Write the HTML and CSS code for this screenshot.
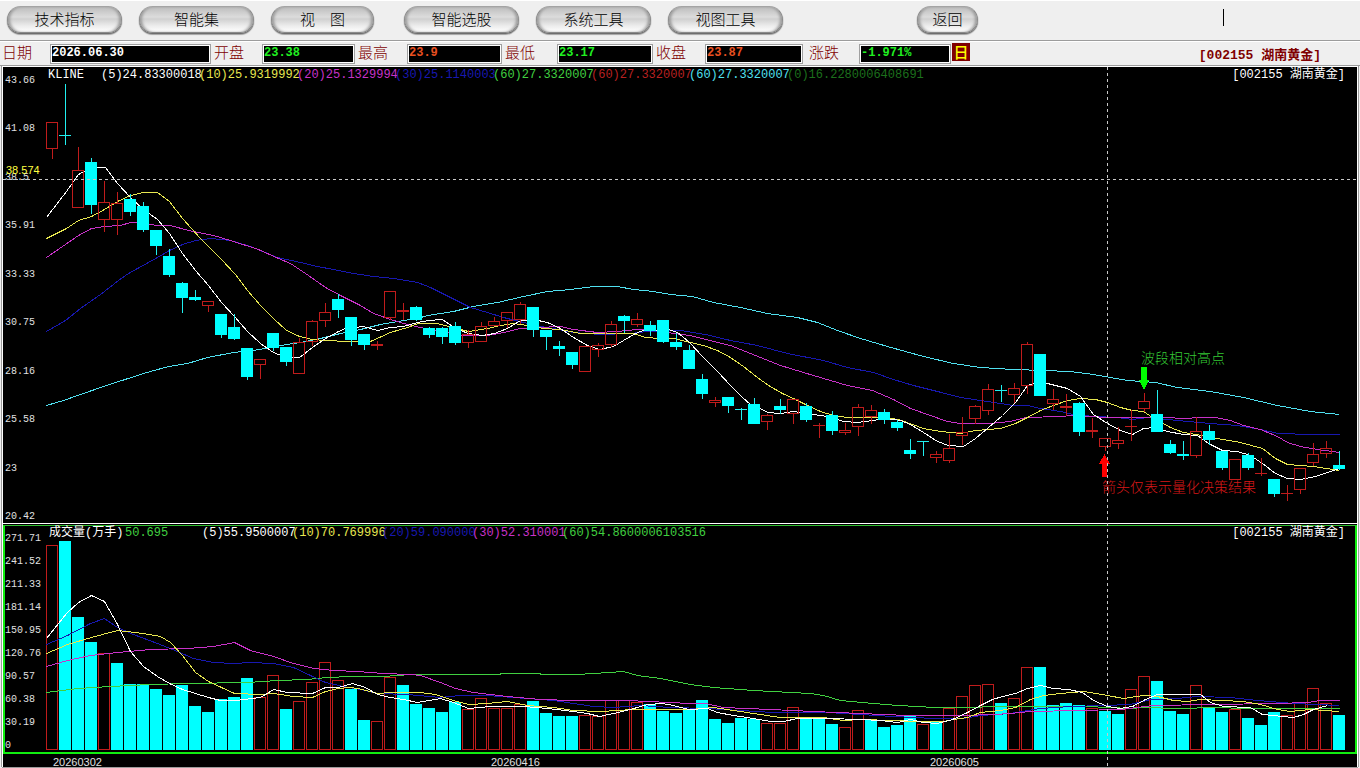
FILE: index.html
```html
<!DOCTYPE html>
<html lang="zh-CN">
<head>
<meta charset="utf-8">
<title>002155 湖南黄金</title>
<link rel="stylesheet" href="styles.css">
</head>
<body>
<nav class="toolbar">
  <button class="pill w-l">技术指标</button>
  <button class="pill w-l">智能集</button>
  <button class="pill w-m">视　图</button>
  <button class="pill w-l group">智能选股</button>
  <button class="pill w-l">系统工具</button>
  <button class="pill w-l">视图工具</button>
  <button class="pill w-s back">返回</button>
  <span class="caret"></span>
</nav>

<section class="quote">
  <label for="f-date">日期</label><input id="f-date" class="c-white" value="2026.06.30" readonly>
  <label for="f-open">开盘</label><input id="f-open" class="c-up" value="23.38" readonly>
  <label for="f-high">最高</label><input id="f-high" class="c-hot" value="23.9" readonly>
  <label for="f-low">最低</label><input id="f-low" class="c-up" value="23.17" readonly>
  <label for="f-close">收盘</label><input id="f-close" class="c-hot" value="23.87" readonly>
  <label for="f-chg" class="wide">涨跌</label><input id="f-chg" class="c-up" value="-1.971%" readonly>
  <button class="period">日</button>
  <strong class="stock">[002155 湖南黄金]</strong>
</section>

<main class="chart">
  <section class="pane price">
    <div class="axis">
      <span>43.66</span><span>41.08</span><span>38.5</span><span>35.91</span><span>33.33</span><span>30.75</span><span>28.16</span><span>25.58</span><span>23</span><span>20.42</span>
    </div>
    <svg id="price" class="plot" viewBox="46 67 1311 456" preserveAspectRatio="none"></svg>
    <div class="legend price-legend">
      <span class="c-white">KLINE</span><span class="c-white">(5)24.83300018</span><span class="c-yellow">(10)25.9319992</span><span class="c-magenta">(20)25.1329994</span><span class="c-blue">(30)25.1140003</span><span class="c-green">(60)27.3320007</span><span class="c-red">(60)27.3320007</span><span class="c-cyan">(60)27.3320007</span><span class="c-dark">(0)16.2280006408691</span>
    </div>
    <span class="name">[002155 湖南黄金]</span>
    <span class="note high">波段相对高点</span>
    <span class="note low">箭头仅表示量化决策结果</span>
    <span class="cursor-price">38.574</span>
  </section>

  <section class="pane volume">
    <div class="axis">
      <span>271.71</span><span>241.52</span><span>211.33</span><span>181.14</span><span>150.95</span><span>120.76</span><span>90.57</span><span>60.38</span><span>30.19</span><span>0</span>
    </div>
    <svg id="volume" class="plot" viewBox="46 526 1309 226" preserveAspectRatio="none"></svg>
    <div class="legend volume-legend">
      <span class="c-white">成交量(万手)</span><span class="c-green">50.695</span><span class="c-white">(5)55.9500007</span><span class="c-yellow">(10)70.769996</span><span class="c-blue">(20)59.090000</span><span class="c-magenta">(30)52.310001</span><span class="c-green">(60)54.8600006103516</span>
    </div>
    <span class="name">[002155 湖南黄金]</span>
  </section>

  <div class="dates"><span>20260302</span><span>20260416</span><span>20260605</span></div>
  <i class="cross cross-h"></i>
  <i class="cross cross-v"></i>
</main>
<script src="chart.js"></script>
</body>
</html>
```

FILE: styles.css
```css
* { box-sizing: border-box; }

body {
  margin: 0;
  height: 100vh;
  display: flex;
  flex-direction: column;
  overflow: hidden;
  background: #efefef;
  font-family: "Liberation Mono", "Noto Sans CJK SC", monospace;
  font-size: 12px;
}

/* toolbar */
.toolbar {
  display: flex;
  align-items: flex-start;
  gap: 17px;
  height: 41px;
  flex: none;
  padding: 5px 136px 0 7px;
  border-top: 1px solid #fff;
  border-bottom: 1px solid #9c9c9c;
}
.pill {
  height: 27px;
  padding: 0 0 1px;
  border: 1px solid #8a8a8a;
  border-top-color: #a4a4a4;
  border-radius: 14px;
  background: linear-gradient(#bdbdbd, #dcdcdc 40%, #d0d0d0 48%, #ececec 75%, #fff);
  box-shadow: inset 3px 0 3px -1px #9a9a9a, inset -3px 0 3px -1px #9a9a9a, 0 1px 1px #666, 0 2px 1px #aaa;
  color: #000;
  font: 15px "Noto Sans CJK SC", sans-serif;
  font-weight: 300;
  line-height: 22px;
  white-space: nowrap;
}
.w-l { width: 115px; }
.w-m { width: 103px; }
.w-s { width: 61px; }
.group { margin-left: 13px; }
.back { margin-left: 117px; }
.caret {
  width: 1px;
  height: 17px;
  margin: 3px 0 0 auto;
  background: #000;
}

/* quote bar */
.quote {
  display: grid;
  grid-template-columns: 48px 161px 51px 93px 52px 95px 55px 96px 52px 98px 56px 92px 19px 1fr;
  align-items: center;
  height: 25px;
  flex: none;
  padding-left: 2px;
  border-top: 1px solid #fff;
  border-bottom: 1px solid #9c9c9c;
}
.quote label {
  padding: 0 0 3px 3px;
  color: #800000;
  font: 15px "Noto Sans CJK SC", sans-serif;
  font-weight: 300;
  line-height: 20px;
}
.quote label:first-child { padding-left: 0; }
.quote .wide { padding-left: 6px; }
.quote input {
  width: 100%;
  height: 20px;
  padding: 0 0 1px 1px;
  border: 1px solid #a0a0a0;
  outline: 1px solid #fff;
  outline-offset: -2px;
  background: #000;
  font: bold 12px "Liberation Mono", monospace;
}
.period {
  height: 18px;
  margin: 1px 0 0 1px;
  padding: 0;
  border: 0;
  background: #800000;
  color: #ff0;
  font: 15px "Noto Sans CJK SC", sans-serif;
  font-weight: 500;
  line-height: 16px;
  align-self: start;
}
.stock {
  justify-self: end;
  padding-right: 39px;
  color: #800000;
  font-size: 13px;
}

/* chart */
.chart {
  position: relative;
  display: grid;
  grid-template-rows: minmax(0, 457fr) 1px minmax(0, 229fr) 13px;
  flex: 1;
  min-height: 0;
  border: solid #fff;
  border-width: 1px 1px 0 1px;
  margin: 0 2px 1px 2px;
  background: #000;
  box-shadow: -1px 0 #9c9c9c, 1px 0 #9c9c9c, 0 1px #9c9c9c;
}
.pane {
  position: relative;
  display: flex;
  min-height: 0;
}
.price {
  grid-row: 1;
  border-bottom: 1px solid #fff;
}
.volume {
  grid-row: 3;
  border: 2px solid #10ee10;
  border-top: 1px solid #30c030;
}
.axis {
  display: flex;
  flex-direction: column;
  justify-content: space-between;
  flex: none;
  width: 43px;
  padding: 8px 0 0 2px;
  color: #e0e0e0;
  font-size: 10px;
  line-height: 12px;
}
.volume .axis { width: 41px; padding-left: 0; padding-top: 7px; }
.plot {
  flex: 1;
  min-width: 0;
  height: 100%;
  shape-rendering: crispEdges;
}

.legend {
  position: absolute;
  top: 1px;
  display: grid;
  white-space: nowrap;
  line-height: 15px;
}
.price-legend { left: 45px; grid-template-columns: 53px repeat(7, 98px) auto; }
.volume-legend { left: 44px; grid-template-columns: 76px 77px repeat(4, 90px) auto; line-height: 13px; }
.name {
  position: absolute;
  top: 1px;
  right: 12px;
  color: #fff;
  line-height: 15px;
}
.volume .name { right: 10px; line-height: 13px; }
.note {
  position: absolute;
  font: 14px "Noto Sans CJK SC", sans-serif;
  font-weight: 300;
  line-height: 16px;
  white-space: nowrap;
}
.note.high { left: 1138px; top: 282px; color: #34c834; }
.note.low { left: 1099px; top: 411px; color: #d81818; }
.cursor-price {
  position: absolute;
  left: 3px;
  top: 97px;
  color: #ffff40;
  font: 11px "Liberation Sans", sans-serif;
}
.dates {
  grid-row: 4;
  display: grid;
  grid-template-columns: 438px 439px 1fr;
  padding: 2px 0 0 50px;
  color: #e0e0e0;
  font: 11px "Liberation Sans", sans-serif;
  line-height: 12px;
}
.cross { position: absolute; }
.cross-h {
  left: 0; right: 0; top: 112px; height: 1px;
  background: repeating-linear-gradient(90deg, #c8c8c8 0 3px, transparent 3px 6px);
}
.cross-v {
  top: 0; bottom: 0; left: 1104px; width: 1px;
  background: repeating-linear-gradient(#c8c8c8 0 3px, transparent 3px 6px);
}

/* series colours */
.c-white { color: #fff; }
.c-up { color: #20f020; }
.c-hot { color: #e85020; }
.c-yellow { color: #e8e850; }
.c-magenta { color: #c832c8; }
.c-blue { color: #1818b0; }
.c-green { color: #40d040; }
.c-red { color: #b82020; }
.c-cyan { color: #50e0f0; }
.c-dark { color: #1c701c; }

.down { fill: #0ff; stroke: none; }
.down-line { stroke: #20f0f0; fill: none; }
.up { stroke: #c01c1c; fill: none; }
.line { fill: none; stroke: currentColor; stroke-width: 1; }
.arrow-down { fill: #0f0; }
.arrow-up { fill: #f00; }
```

FILE: chart.js
```js
// Candles: kind (r = rising outline, c = falling solid), high, body top, body bottom, low
const candles = `r122,122,148,159 c84,135,135,145 r147,170,207,207 c158,162,205,214 r181,202,219,232
r192,203,219,235 c194,199,212,216 c202,206,230,232 c230,230,246,255 c249,256,275,277
c282,283,298,313 c290,297,300,301 r301,301,305,312 c314,314,335,338 c314,327,339,340
c348,348,377,380 r359,359,364,379 c333,333,348,351 c347,347,362,366 r338,342,373,373
r320,321,341,346 r303,312,320,327 c294,299,310,318 c317,317,340,346 c334,334,345,350
r341,344,345,350 r291,291,317,320 r303,310,311,320 c306,307,320,321 c327,328,335,338
c327,328,337,344 c322,326,343,345 r330,334,342,348 r322,326,341,341 r317,321,325,325
r312,312,320,328 r302,304,319,324 c307,307,330,337 c330,330,337,350 c341,346,349,356
c352,352,365,369 r346,346,371,371 r343,345,349,357 r321,324,344,347 c315,316,321,333
r313,319,324,327 c321,325,331,336 c320,320,342,343 c333,342,347,350 c345,350,369,369
c374,379,394,399 r397,400,402,407 c397,397,406,413 c408,409,409,420 c398,404,424,424
r414,415,421,430 c399,406,410,414 r399,399,413,424 c403,406,420,422 r423,425,425,438
c411,415,431,435 r423,430,432,435 r404,407,426,436 r405,410,416,424 c409,412,420,424
c420,422,428,431 c439,450,454,459 c441,441,441,456 r451,454,457,463 r434,448,460,463
r417,432,435,445 r405,406,418,424 r384,389,410,415 c385,390,390,402 r383,388,394,403
r342,344,385,394 c354,354,396,396 r389,399,403,410 r394,406,407,416 c402,403,432,436
r418,430,431,438 r438,438,446,451 r427,440,443,449 r410,426,426,441 r393,401,408,412
c390,414,432,432 c440,444,453,454 c441,454,456,460 r417,431,455,458 c425,431,440,445
c451,451,468,470 r459,459,479,479 c453,455,468,470 r458,473,473,476 c479,479,494,497
r485,493,493,501 r468,468,489,494 r443,454,462,466 r441,448,453,458 c451,465,469,470`;

const volumes = `r545 c541 c617 c642 r653 c663 c684 c684 c689 c695 c685 c706 c712 c699 c697 c678 r697 r675
c709 r701 r682 r662 r680 c689 c720 r721 r677 c685 c704 c708 c712 c702 r709 r698 r708 r708 r704 c701 c713
c716 c716 r715 r716 r700 r700 r702 c704 c711 c713 c709 c700 c719 c723 c718 c719 r723 r723 r707 c717 c718
c724 r727 r710 c719 c727 c725 c716 r724 c722 r708 r696 r685 r684 c703 r698 r667 c667 c705 c703 c705 r708
c711 c714 r689 r676 c681 c711 c714 r685 c708 c712 r709 c718 c725 c712 r715 r703 r688 r703 c715`;

const priceLines = {
  cyan: "46,405 63,400 80,394 103,386 143,373 168,366 187,363 207,357 233,352 253,350 280,345 300,342 320,338 340,333 360,329 380,324 397,321 417,318 427,315 453,311 473,306 497,302 523,296 547,291 570,289 593,286 617,286 633,289 653,291 670,294 692,296 713,302 740,307 767,313 797,317 817,322 837,330 860,338 887,346 923,356 953,363 980,367 1013,369 1043,370 1070,371 1093,374 1127,380 1155,382 1177,387 1210,391 1243,397 1277,405 1310,411 1339,414",
  blue: "46,331 65,320 80,308 100,294 118,280 128,273 157,257 169,250 182,244 195,240 210,238 230,240 250,246 277,257 300,262 317,266 333,269 353,273 373,276 393,278 417,282 430,287 450,297 470,307 487,312 503,317 523,322 540,326 553,328 573,332 600,334 630,333 647,331 680,330 705,334 730,340 757,345 787,353 823,360 847,367 873,372 893,379 913,385 937,391 960,397 980,400 1000,403 1013,405 1027,405 1040,408 1060,411 1073,414 1093,416 1117,417 1132,419 1147,417 1177,420 1210,423 1237,425 1260,429 1278,433 1310,434 1339,434",
  magenta: "46,257 78,235 91,228 104,226 120,225 130,222 143,223 157,225 170,225 188,230 213,235 230,240 258,249 278,258 290,263 308,275 325,287 340,295 360,305 373,313 390,319 407,324 420,327 440,331 463,335 487,335 503,332 520,328 537,327 560,326 573,329 597,332 617,331 637,329 657,330 673,333 690,335 705,339 730,345 755,355 780,365 813,375 847,385 872,390 893,399 910,408 927,414 947,421 960,423 990,423 1010,421 1025,417 1060,416 1072,415 1107,417 1162,417 1187,418 1197,417 1215,417 1230,420 1243,425 1260,429 1277,436 1287,442 1300,446 1317,449 1339,452",
  yellow: "46,238 66,228 78,220 91,216 104,209 117,201 130,195 143,192 157,192 169,201 182,218 200,238 220,258 235,274 247,290 260,305 273,318 286,330 299,336 312,339 325,340 347,341 370,341 390,332 407,327 418,323 437,323 448,326 468,331 487,328 500,325 513,323 527,325 543,328 560,329 580,333 597,333 633,333 645,337 660,338 673,338 690,342 703,345 717,350 730,357 743,366 757,377 768,385 782,393 795,399 807,405 820,411 833,415 847,417 883,417 898,419 912,424 923,428 940,431 960,433 975,430 1000,428 1015,423 1027,417 1040,410 1053,405 1067,400 1080,398 1095,399 1107,402 1120,407 1132,410 1143,411 1155,419 1170,427 1183,432 1202,435 1222,439 1240,442 1262,448 1275,458 1287,464 1313,466 1339,470",
  white: "46,217 66,191 78,174 91,167 105,167 117,183 130,197 143,209 157,219 169,233 182,253 195,270 208,285 221,302 234,316 247,331 260,343 273,352 286,357 299,357 312,347 325,338 338,331 345,328 363,326 377,330 390,327 403,326 417,322 428,320 442,319 455,328 468,333 482,335 494,333 507,328 520,320 533,319 547,322 560,328 573,337 587,345 599,349 613,346 623,340 635,333 645,329 657,330 668,329 677,332 688,341 703,357 717,371 730,385 742,397 750,404 762,409 767,412 780,413 793,411 813,414 827,416 843,421 857,422 872,420 885,418 900,420 910,424 923,432 937,441 948,445 963,446 975,438 988,427 1002,415 1015,402 1027,385 1033,383 1047,383 1067,388 1080,396 1093,414 1107,423 1120,430 1132,434 1143,428 1155,427 1167,431 1183,434 1197,435 1208,443 1222,450 1237,451 1250,455 1262,463 1275,473 1287,478 1300,479 1315,476 1327,472 1339,468"
};

const volumeLines = {
  green: "46,692 77,688 110,686 150,684 187,683 247,682 277,680 307,679 327,677 350,676 383,676 410,674 497,674 503,673 537,673 543,674 577,674 593,673 623,671 637,675 660,678 690,684 713,687 753,690 810,693 823,695 840,700 873,703 897,705 917,706 933,707 1030,706 1087,706 1130,708 1143,707 1177,708 1217,707 1243,708 1339,708",
  blue: "46,644 67,635 90,623 104,618 117,627 133,634 157,643 177,651 193,658 213,662 233,663 250,662 273,663 293,667 310,675 325,682 343,686 360,689 377,693 407,694 440,697 460,695 487,695 513,697 553,700 573,703 593,706 613,707 640,705 670,707 707,708 740,710 773,712 827,712 860,714 893,716 933,718 963,718 980,715 1010,713 1040,708 1070,706 1103,705 1130,704 1150,699 1177,698 1197,696 1230,697 1257,700 1293,703 1339,705",
  magenta: "46,666 67,660 90,655 117,652 150,649 187,648 213,646 234,642 250,650 273,656 290,662 313,668 333,670 357,671 383,673 410,674 420,675 440,682 455,688 473,692 507,696 540,699 573,700 627,700 690,703 705,703 723,707 770,709 813,711 860,713 907,715 963,715 993,714 1010,713 1030,711 1077,710 1120,709 1153,705 1210,704 1277,703 1307,702 1320,700 1339,700",
  yellow: "46,653 67,644 91,637 117,630 143,633 160,636 170,642 182,655 195,672 208,681 221,687 234,693 260,694 273,693 293,696 312,697 325,691 338,688 350,687 362,689 377,693 390,692 420,692 435,694 453,700 468,704 487,703 507,701 527,705 553,707 573,710 600,711 633,709 690,709 713,707 733,710 753,713 780,717 823,717 843,720 860,719 893,720 913,721 943,721 953,719 967,717 980,712 1000,710 1015,707 1030,699 1043,695 1060,693 1083,691 1107,695 1123,698 1143,695 1157,696 1173,700 1187,701 1200,699 1243,701 1260,704 1277,709 1290,711 1310,709 1339,711",
  white: "46,638 66,613 78,602 91,595 104,601 117,624 130,651 143,666 157,676 169,683 182,689 195,693 208,697 220,700 235,700 260,697 273,689 287,692 312,693 325,687 338,687 352,683 365,687 377,694 390,697 403,699 417,702 440,698 453,702 468,708 490,706 523,706 547,708 573,711 587,713 599,716 613,713 630,709 647,704 662,703 673,705 688,709 707,708 717,712 733,715 753,718 770,721 783,721 797,718 827,718 860,719 880,720 897,722 910,719 923,722 937,723 952,719 967,712 980,705 992,699 1002,696 1015,693 1027,688 1040,685 1053,688 1068,689 1082,692 1093,700 1107,706 1120,708 1132,706 1145,699 1157,694 1200,694 1210,702 1223,706 1250,707 1262,714 1293,717 1303,714 1313,709 1327,705"
};

const FIRST = 46;
const STEP = 13;
const BODY = 12;
const BASE = 750;

function add(svg, tag, attrs) {
  const el = document.createElementNS("http://www.w3.org/2000/svg", tag);
  for (const key in attrs) el.setAttribute(key, attrs[key]);
  svg.appendChild(el);
}

function drawLines(svg, lines) {
  for (const colour in lines) {
    add(svg, "polyline", { class: "line c-" + colour, points: lines[colour], transform: "translate(0.5 0.5)" });
  }
}

function segment(svg, cls, x1, y1, x2, y2) {
  add(svg, "path", { class: cls, d: `M${x1} ${y1}L${x2} ${y2}` });
}

const price = document.getElementById("price");
drawLines(price, priceLines);
candles.split(/\s+/).forEach((row, i) => {
  const rising = row[0] === "r";
  const [high, top, bottom, low] = row.slice(1).split(",").map(Number);
  const x = FIRST + STEP * i;
  const mid = x + 6.5;
  const cls = rising ? "up" : "down-line";
  if (high < top) segment(price, cls, mid, high, mid, top);
  if (low > bottom) segment(price, cls, mid, bottom, mid, low);
  if (top === bottom) {
    segment(price, cls, x, top + 0.5, x + BODY, top + 0.5);
  } else if (rising) {
    add(price, "rect", { class: "up", x: x + 0.5, y: top + 0.5, width: BODY - 1, height: bottom - top });
  } else {
    add(price, "rect", { class: "down", x: x, y: top, width: BODY, height: bottom - top });
  }
});
add(price, "path", { class: "arrow-down", d: "M1141 367H1147V380H1149L1144 390L1139 380H1141Z" });
add(price, "path", { class: "arrow-up", d: "M1104.5 454L1110 464H1107V477H1102V464H1099Z" });

const volume = document.getElementById("volume");
volumes.split(/\s+/).forEach((row, i) => {
  const top = Number(row.slice(1));
  const x = FIRST + STEP * i;
  if (row[0] === "r") {
    add(volume, "rect", { class: "up", x: x + 0.5, y: top + 0.5, width: BODY - 1, height: BASE - 1 - top });
  } else {
    add(volume, "rect", { class: "down", x: x, y: top, width: BODY, height: BASE - top });
  }
});
drawLines(volume, volumeLines);
```
